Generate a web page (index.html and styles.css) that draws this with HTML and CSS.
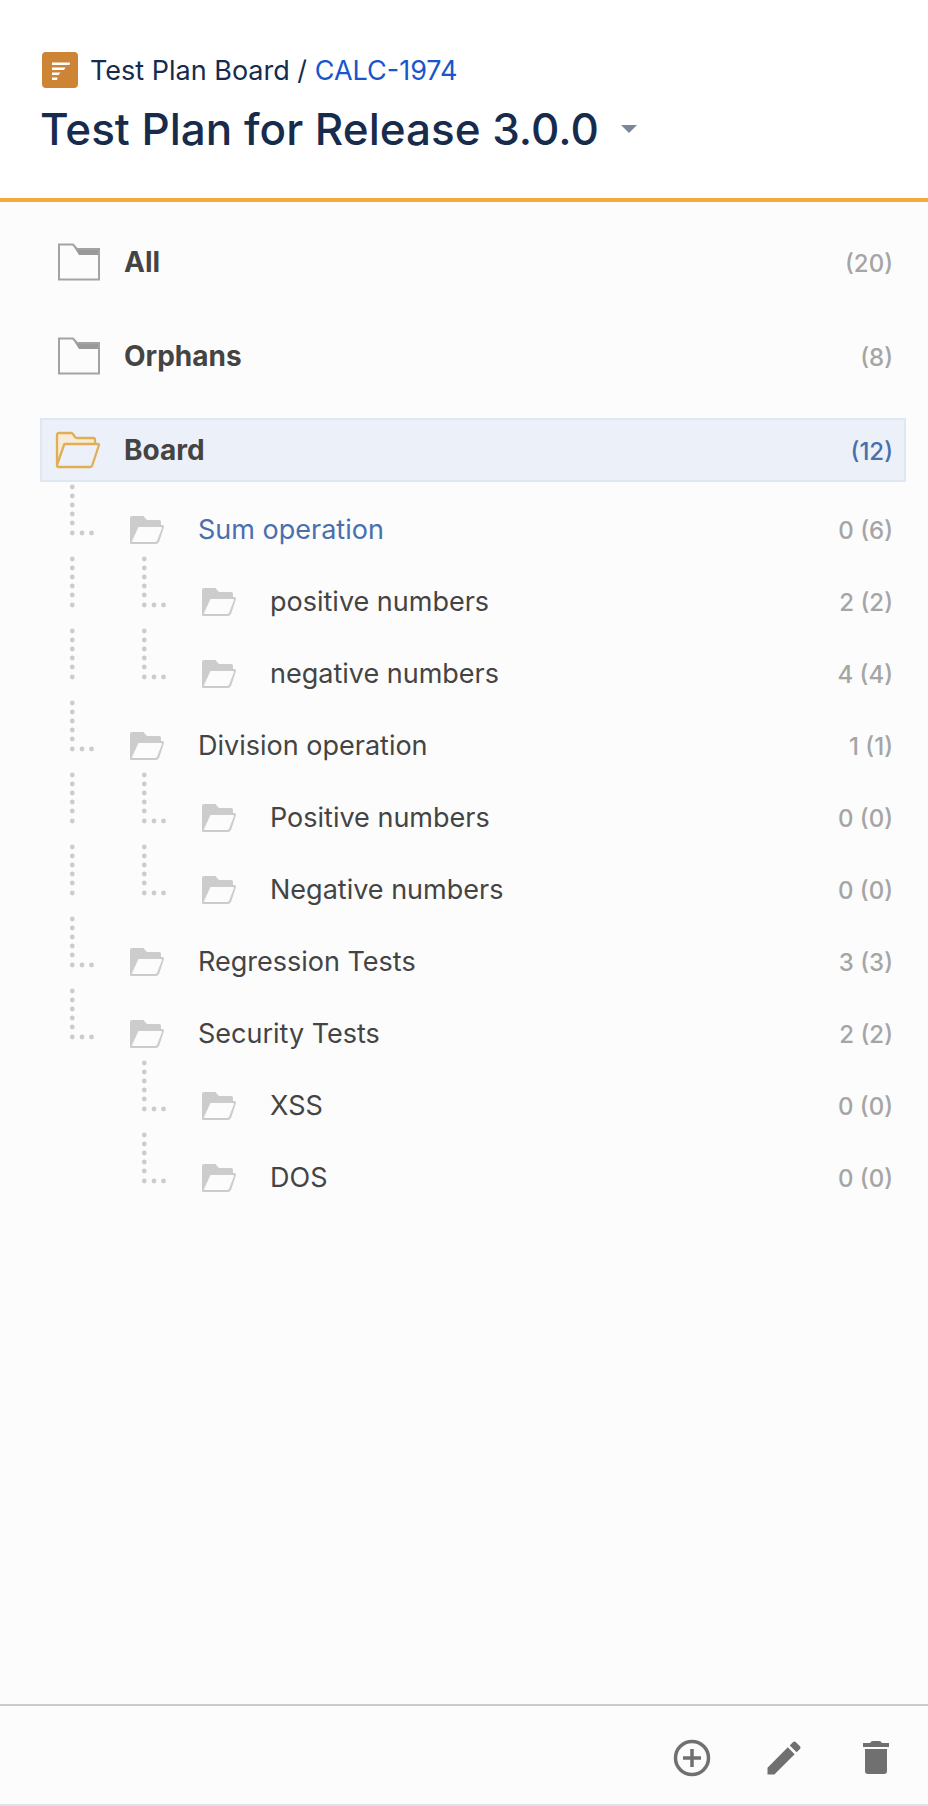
FILE: index.html
```html
<!DOCTYPE html>
<html lang="en">
<head>
    <meta charset="UTF-8">
    <meta name="viewport" content="width=device-width, initial-scale=1.0">
    <title>Test Plan Board</title>
    <link rel="stylesheet" href="styles.css">
</head>
<body>
    <!-- Shared icons -->
    <svg class="icon-defs" aria-hidden="true">
        <symbol id="icon-folder" viewBox="0 0 48 40">
            <path d="M18 2l7 11h21V6H21z" fill="#999"/>
            <path d="M5 2.500h14l4 4.500h22v30.500H5z" fill="none" stroke="#a3a3a3" stroke-width="2"/>
        </symbol>
        <symbol id="icon-folder-active" viewBox="0 0 48 40">
            <path d="M3 36V5q0-2 2-2h12l4 5h18q2 0 2 2v4H11L3 37z" fill="#f7ead6"/>
            <path d="M3 35V5q0-2 2-2h12q1 0 2 1l2 3q1 1 2 1h16q2 0 2 2v4M11 14h33q1 0 1 1l-7 21q-1 1-2 1H4q-1 0-1-2l7-20q0-1 1-1z" fill="none" stroke="#e0ae55" stroke-width="2.300" stroke-linejoin="round"/>
        </symbol>
        <symbol id="icon-folder-open" viewBox="0 0 34 28">
            <path d="M0 27V2q0-2 2-2h11q1 0 2 2l2 2h12q2 0 2 2v3h2q1 0 1 2l-5 15q-1 2-3 2H1q-1 0-1-1zM9 11q-1 0-1 1L2 25q0 1 1 1h22q1 0 2-1l5-13q0-1-1-1z" fill="#ccc" fill-rule="evenodd"/>
        </symbol>
        <symbol id="line-through" viewBox="0 0 72 72">
            <g fill="#ccc">
                <circle cx="32.300" cy="5" r="2.400"/>
                <circle cx="32.300" cy="14" r="2.400"/>
                <circle cx="32.300" cy="23" r="2.400"/>
                <circle cx="32.300" cy="32" r="2.400"/>
                <circle cx="32.300" cy="41" r="2.400"/>
                <circle cx="32.300" cy="51" r="2.400"/>
            </g>
        </symbol>
        <symbol id="line-branch" viewBox="0 0 72 72">
            <use href="#line-through" width="72" height="72"/>
            <g fill="#ccc">
                <circle cx="42" cy="51" r="2.400"/>
                <circle cx="51.500" cy="51" r="2.400"/>
            </g>
        </symbol>
    </svg>

    <div class="board">
        <!-- Header -->
        <header class="header">
            <div class="breadcrumb">
                <svg class="plan-icon" viewBox="0 0 36 36" aria-hidden="true">
                    <rect width="36" height="36" rx="4" fill="#cd8535"/>
                    <path d="M10 10.500h18l-.5 2.500H10zM10 15.500h13.500l-1.500 2.500H10zM10 20.500h8.500l-2 2.500H10zM10 25.500h5.500l-.5 2.500H10z" fill="#fff"/>
                </svg>
                <span>Test Plan Board / <a href="#">CALC-1974</a></span>
            </div>
            <div class="title-row">
                <h1>Test Plan for Release 3.0.0</h1>
                <button class="caret-btn" aria-label="Board options">
                    <svg width="16" height="8" viewBox="0 0 16 8"><path d="M0 0h16L8 8z" fill="#7a869a"/></svg>
                </button>
            </div>
        </header>

        <!-- Folder tree -->
        <main class="tree">
            <div class="root">
                <svg class="root-icon"><use href="#icon-folder"/></svg>
                <span class="name">All</span>
                <span class="count">(20)</span>
            </div>
            <div class="root">
                <svg class="root-icon"><use href="#icon-folder"/></svg>
                <span class="name">Orphans</span>
                <span class="count">(8)</span>
            </div>
            <div class="root selected">
                <svg class="root-icon"><use href="#icon-folder-active"/></svg>
                <span class="name">Board</span>
                <span class="count">(12)</span>
            </div>

            <ul class="folders">
                <li class="folder highlighted">
                    <svg class="line"><use href="#line-branch"/></svg>
                    <svg class="folder-icon"><use href="#icon-folder-open"/></svg>
                    <span class="name">Sum operation</span>
                    <span class="count">0 (6)</span>
                </li>
                <li class="folder">
                    <svg class="line"><use href="#line-through"/></svg>
                    <svg class="line"><use href="#line-branch"/></svg>
                    <svg class="folder-icon"><use href="#icon-folder-open"/></svg>
                    <span class="name">positive numbers</span>
                    <span class="count">2 (2)</span>
                </li>
                <li class="folder">
                    <svg class="line"><use href="#line-through"/></svg>
                    <svg class="line"><use href="#line-branch"/></svg>
                    <svg class="folder-icon"><use href="#icon-folder-open"/></svg>
                    <span class="name">negative numbers</span>
                    <span class="count">4 (4)</span>
                </li>
                <li class="folder">
                    <svg class="line"><use href="#line-branch"/></svg>
                    <svg class="folder-icon"><use href="#icon-folder-open"/></svg>
                    <span class="name">Division operation</span>
                    <span class="count">1 (1)</span>
                </li>
                <li class="folder">
                    <svg class="line"><use href="#line-through"/></svg>
                    <svg class="line"><use href="#line-branch"/></svg>
                    <svg class="folder-icon"><use href="#icon-folder-open"/></svg>
                    <span class="name">Positive numbers</span>
                    <span class="count">0 (0)</span>
                </li>
                <li class="folder">
                    <svg class="line"><use href="#line-through"/></svg>
                    <svg class="line"><use href="#line-branch"/></svg>
                    <svg class="folder-icon"><use href="#icon-folder-open"/></svg>
                    <span class="name">Negative numbers</span>
                    <span class="count">0 (0)</span>
                </li>
                <li class="folder">
                    <svg class="line"><use href="#line-branch"/></svg>
                    <svg class="folder-icon"><use href="#icon-folder-open"/></svg>
                    <span class="name">Regression Tests</span>
                    <span class="count">3 (3)</span>
                </li>
                <li class="folder">
                    <svg class="line"><use href="#line-branch"/></svg>
                    <svg class="folder-icon"><use href="#icon-folder-open"/></svg>
                    <span class="name">Security Tests</span>
                    <span class="count">2 (2)</span>
                </li>
                <li class="folder">
                    <svg class="line"></svg>
                    <svg class="line"><use href="#line-branch"/></svg>
                    <svg class="folder-icon"><use href="#icon-folder-open"/></svg>
                    <span class="name">XSS</span>
                    <span class="count">0 (0)</span>
                </li>
                <li class="folder">
                    <svg class="line"></svg>
                    <svg class="line"><use href="#line-branch"/></svg>
                    <svg class="folder-icon"><use href="#icon-folder-open"/></svg>
                    <span class="name">DOS</span>
                    <span class="count">0 (0)</span>
                </li>
            </ul>
        </main>

        <!-- Toolbar -->
        <footer class="toolbar">
            <button aria-label="Add folder">
                <svg viewBox="0 0 44 44">
                    <circle cx="22" cy="22" r="16.500" fill="none" stroke="#707070" stroke-width="3.500"/>
                    <path d="M22 13v18M13 22h18" stroke="#707070" stroke-width="3.500"/>
                </svg>
            </button>
            <button aria-label="Edit folder">
                <svg viewBox="0 0 24 24"><path d="M3 17.250V21h3.750L17.810 9.940l-3.750-3.750L3 17.250zM20.710 7.040c.39-.39.39-1.020 0-1.410l-2.340-2.340c-.39-.39-1.020-.39-1.410 0l-1.830 1.830 3.750 3.750 1.830-1.830z" fill="#707070"/></svg>
            </button>
            <button aria-label="Delete folder">
                <svg viewBox="0 0 44 44"><path d="M11 13h22v22q0 3-3 3H14q-3 0-3-3zM9 7h7q1-2 3-2h6q2 0 3 2h7v4H9z" fill="#707070"/></svg>
            </button>
        </footer>
    </div>
</body>
</html>
```

FILE: styles.css
```css
* {
    box-sizing: border-box;
}

body {
    margin: 0;
    background: #fcfcfc;
    font-family: Inter, "Liberation Sans", sans-serif;
    font-size: 27px;
    color: #444;
}

.icon-defs {
    position: absolute;
    width: 0;
    height: 0;
}

.board {
    display: flex;
    flex-direction: column;
    min-height: 100vh;
    border-bottom: 2px solid #dfe1e8;
}

/* Header */
.header {
    padding: 52px 40px 38px;
    background: #fff;
    border-bottom: 4px solid #f5a83d;
    color: #172b4d;
}

.breadcrumb {
    display: flex;
    align-items: center;
    gap: 12px;
    height: 36px;
    padding-left: 2px;
}

.plan-icon {
    width: 36px;
    height: 36px;
}

.breadcrumb a {
    color: #1a55cc;
    text-decoration: none;
}

.title-row {
    display: flex;
    align-items: center;
    gap: 12px;
    height: 72px;
    padding-top: 10px;
}

h1 {
    margin: 0;
    font-size: 44px;
    font-weight: 500;
}

button {
    display: flex;
    align-items: center;
    justify-content: center;
    padding: 0;
    border: none;
    background: none;
    cursor: pointer;
}

.caret-btn {
    width: 36px;
    height: 36px;
}

/* Folder tree */
.tree {
    flex: 1;
    padding: 28px 22px 40px 40px;
}

.root {
    display: flex;
    align-items: baseline;
    height: 64px;
    margin-bottom: 30px;
    padding: 0 11px 0 12px;
    border: 2px solid transparent;
    line-height: 60px;
}

.root.selected {
    margin-bottom: 0;
    background: #ecf1f9;
    border-color: #dfe7f2;
}

.root-icon {
    align-self: center;
    width: 48px;
    height: 40px;
    margin-right: 22px;
}

.root .name {
    font-size: 28px;
    font-weight: 700;
}

.name {
    flex: 1;
}

.count {
    font-size: 24px;
    font-weight: 500;
    color: #a5a5a5;
}

.selected .count,
.highlighted .name {
    color: #4870ad;
}

.folders {
    margin: 0;
    padding: 0 13px 0 0;
    list-style: none;
}

.folder {
    display: flex;
    align-items: baseline;
    height: 72px;
    line-height: 48px;
}

.folder .name,
.folder .count {
    padding-top: 24px;
}

.line {
    align-self: flex-start;
    width: 72px;
    height: 72px;
}

.folder-icon {
    align-self: flex-start;
    width: 34px;
    height: 28px;
    margin: 34px 34px 0 18px;
}

/* Toolbar */
.toolbar {
    display: flex;
    justify-content: flex-end;
    align-items: center;
    gap: 48px;
    height: 100px;
    padding: 6px 30px 0;
    border-top: 2px solid #ccc;
}

.toolbar button,
.toolbar svg {
    width: 44px;
    height: 44px;
}
```
